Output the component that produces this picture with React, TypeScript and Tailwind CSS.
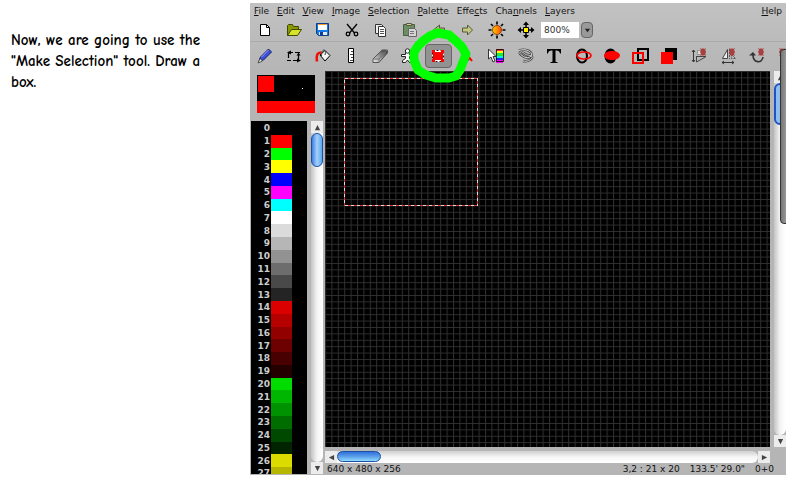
import type { ReactNode } from "react";

const menus = [
  ["", "F", "ile"],
  ["", "E", "dit"],
  ["", "V", "iew"],
  ["", "I", "mage"],
  ["", "S", "election"],
  ["", "P", "alette"],
  ["Effe", "c", "ts"],
  ["Cha", "n", "nels"],
  ["", "L", "ayers"],
];

const palette = [
  "#000000", "#ff0000", "#00ff00", "#ffff00", "#0000ff", "#ff00ff", "#00ffff",
  "#ffffff", "#dbdbdb", "#b6b6b6", "#929292", "#6d6d6d", "#494949", "#242424",
  "#db0000", "#b60000", "#920000", "#6d0000", "#490000", "#240000",
  "#00db00", "#00b600", "#009200", "#006d00", "#004900", "#002400",
  "#dbdb00", "#b6b600",
];

const Icon = ({ children }: { children: ReactNode }) => (
  <svg className="w-5 h-5 shrink-0" viewBox="0 0 20 20" fill="none" stroke="#000">
    {children}
  </svg>
);

const star = "M10 2l2 1 1-1 1 1 2-1-1 2 1 2-1 2 1 2-2-1-1 1-1-1-2 1 1-2-1-2 1-2z";

const fileTools = [
  {
    label: "New",
    icon: (
      <Icon>
        <path d="M5.5 4.5h6l3 3v8h-9z" fill="#fff" />
        <path d="M11.5 4.5v3h3" />
      </Icon>
    ),
  },
  {
    label: "Open",
    icon: (
      <Icon>
        <path d="M3.5 15.5v-10l1-1h4l1 2h5v3" fill="#8a9a00" stroke="#3f4a00" />
        <path d="M3.5 15.5l4-6h10l-4 6z" fill="#d6e32a" stroke="#3f4a00" />
      </Icon>
    ),
  },
  {
    label: "Save",
    icon: (
      <Icon>
        <path d="M3.5 3.5h12v12h-10l-2-2z" fill="#1479e6" stroke="#0b3f8c" />
        <path d="M5 4h9v6H5z" fill="#fff" stroke="none" />
        <path d="M5 4h9v1H5z" fill="#ff9a2a" stroke="none" />
        <path d="M6 12h8v3H6z" fill="#e8e8e8" stroke="none" />
        <path d="M7 12h3v3H7z" fill="#0b3f8c" stroke="none" />
      </Icon>
    ),
  },
  {
    label: "Cut",
    icon: (
      <Icon>
        <path d="M5 4l7.5 9M15 4l-7.5 9" strokeWidth="1.3" />
        <circle cx="6" cy="14" r="1.8" strokeWidth="1.3" />
        <circle cx="14" cy="14" r="1.8" strokeWidth="1.3" />
      </Icon>
    ),
  },
  {
    label: "Copy",
    icon: (
      <Icon>
        <path d="M4.5 4.5h6l2 2v7h-8z" fill="#eee" stroke="#333" />
        <path d="M7.5 6.5h5l2 2v8h-7z" fill="#fff" stroke="#333" />
        <path d="M9 9.5h4M9 11.5h4M9 13.5h4" stroke="#555" />
      </Icon>
    ),
  },
  {
    label: "Paste",
    icon: (
      <Icon>
        <path d="M3.5 4.5h11v11h-11z" fill="#6d8f62" stroke="#46603e" />
        <path d="M6.5 3.5h5v2h-5z" fill="#d8cf9c" stroke="#5a5a48" />
        <path d="M8.5 8.5h6l2 2v6h-8z" fill="#d5d5d5" stroke="#666" />
        <path d="M10 11.5h4M10 13.5h4" stroke="#777" />
      </Icon>
    ),
  },
  {
    label: "Undo",
    icon: (
      <Icon>
        <path d="M4.5 10l6-5v3h5v4h-5v3z" fill="#b3b878" stroke="#55583a" />
      </Icon>
    ),
  },
  {
    label: "Redo",
    icon: (
      <Icon>
        <path d="M14.5 10l-5-5v3h-5v4h5v3z" fill="#c3c882" stroke="#55583a" />
      </Icon>
    ),
  },
  {
    label: "Brightness",
    icon: (
      <Icon>
        <defs>
          <linearGradient id="sun">
            <stop offset="0" stopColor="#ffd000" />
            <stop offset="1" stopColor="#ff4800" />
          </linearGradient>
        </defs>
        <path
          d="M10 1.5v3M10 15.5v3M1.5 10h3M15.5 10h3M4 4l2 2M14 14l2 2M16 4l-2 2M6 14l-2 2"
          strokeWidth="1.7"
        />
        <circle cx="10" cy="10" r="4.5" fill="url(#sun)" stroke="#7a2a00" strokeWidth=".8" />
      </Icon>
    ),
  },
  {
    label: "Pan window",
    icon: (
      <Icon>
        <path
          d="M10 1.5l3 3.5H7zM10 18.5l3-3.5H7zM1.5 10L5 7v6zM18.5 10L15 7v6z"
          fill="#000"
          stroke="none"
        />
        <path d="M10 4v12M4 10h12" strokeWidth="1.5" />
        <path d="M7.5 7.5h5v5h-5z" fill="#ffee00" />
      </Icon>
    ),
  },
];

const paintTools = [
  {
    label: "Paint",
    icon: (
      <Icon>
        <path d="M4 15l1.5-4 8-8 3 3-8 8z" fill="#3d50d8" stroke="#151c66" />
        <path d="M6.5 11l7-7" stroke="#9aa6ff" />
        <path d="M3 17l2-4.5L7.5 15z" fill="#eee" stroke="#333" strokeWidth=".8" />
      </Icon>
    ),
  },
  {
    label: "Shuffle",
    icon: (
      <Icon>
        <path d="M6 6.5h3M11 6.5h5M14.5 9v5M4.5 7v5M3 14.5h4M9 14.5h4" strokeWidth="1.2" />
        <path d="M3 6.5l4-2v4zM14.5 6.5l-2 3h4zM17 14.5l-4-2v4z" fill="#000" stroke="none" />
      </Icon>
    ),
  },
  {
    label: "Flood fill",
    icon: (
      <Icon>
        <path d="M7 9l5-4.5 5 5-5 5.5z" fill="#f4f4f4" />
        <path d="M8.5 10c0-4 1-6 2.5-6s2 1.5 1 5" stroke="#444" />
        <path d="M8.5 6.5c-4 0-5.5 2-4.5 9" stroke="#f01000" strokeWidth="2.5" />
      </Icon>
    ),
  },
  {
    label: "Straight line",
    icon: (
      <Icon>
        <path d="M6.5 2.5h5v14h-5z" fill="#fff" />
        <path d="M9 5.5h2M8 8.5h3M9 11.5h2M8 14.5h3" stroke="#444" />
      </Icon>
    ),
  },
  {
    label: "Smudge",
    icon: (
      <Icon>
        <defs>
          <linearGradient id="smudge" x1="0" y1="1" x2="1" y2="0">
            <stop offset="0" stopColor="#eee" />
            <stop offset="1" stopColor="#333" />
          </linearGradient>
        </defs>
        <path d="M2 13l9-9h5.5v3L8 16.5H2z" fill="url(#smudge)" stroke="#555" />
        <path d="M2.5 13H8l8-9M8 13v3" stroke="#777" />
      </Icon>
    ),
  },
  {
    label: "Clone",
    icon: (
      <Icon>
        <path
          d="M5.5 6.5v2h-4v2h4v2l-3 2v2h3l2-2.5 2 2.5h3v-2l-3-2v-2h3v-2h-3v-2z"
          fill="#fff"
          stroke="#222"
        />
        <circle cx="7.5" cy="5" r="2.2" fill="#fff" stroke="#222" />
      </Icon>
    ),
  },
  {
    label: "Make Selection",
    icon: (
      <Icon>
        <path d="M3 4h12v12H3z" fill="#fff" stroke="none" />
        <path d="M3.5 4.5h11v11h-11z" stroke="#111" strokeDasharray="2 2" />
        <path d="M5 6h8v8H5zM3 4h3v3H3zM12 4h3v3h-3zM3 13h3v3H3zM12 13h3v3h-3z" fill="#f00" stroke="none" />
        <path d="M4 6h10v8H4z" fill="#f00" stroke="none" />
      </Icon>
    ),
  },
  {
    label: "Polygon selection",
    icon: (
      <Icon>
        <path d="M8 7l3 4v3H7z" fill="#f00" stroke="#500" />
        <path d="M11 11l3 4" stroke="#f00" strokeWidth="2" />
      </Icon>
    ),
  },
  {
    label: "Place gradient",
    icon: (
      <Icon>
        <path d="M9 3h7v3H9z" fill="#f33" stroke="none" />
        <path d="M9 5h7v2H9z" fill="#ff0" stroke="none" />
        <path d="M9 7h7v3H9z" fill="#1e3" stroke="none" />
        <path d="M9 10h7v2H9z" fill="#0ee" stroke="none" />
        <path d="M9 12h7v2H9z" fill="#22f" stroke="none" />
        <path d="M9 14h7v3H9z" fill="#f0f" stroke="none" />
        <path d="M9.5 3.5h7v12h-7z" strokeWidth=".8" />
        <path d="M1.5 3v10L4 11l2 5 2-1-2-4.5h3z" fill="#fff" stroke="#333" />
      </Icon>
    ),
  },
  {
    label: "Lasso",
    icon: (
      <Icon>
        <path
          d="M3 4.5c5-2 12 0 12.500 3.500s-5 4.500-8 2.500-5-3.500-3-4.500 4 2.500 7 3 5.500 1 4.500 3-5 4-9 3"
          stroke="#444"
          strokeWidth="2.4"
        />
        <path
          d="M3 4.5c5-2 12 0 12.500 3.500s-5 4.500-8 2.500-5-3.500-3-4.500 4 2.500 7 3 5.500 1 4.500 3-5 4-9 3"
          stroke="#ddd"
        />
      </Icon>
    ),
  },
  {
    label: "Paste text",
    icon: (
      <Icon>
        <path
          d="M2 3h14v4.5h-1c-.5-2-1-3-4.500-3V15c0 1 .5 1 2 1v1h-7v-1c1.500 0 2 0 2-1V4.500C4 4.500 3.500 5.500 3 7.500H2z"
          fill="#000"
          stroke="none"
        />
      </Icon>
    ),
  },
  {
    label: "Ellipse outline",
    icon: (
      <Icon>
        <ellipse cx="8" cy="10" rx="5" ry="6.5" strokeWidth="2" />
        <ellipse cx="10" cy="9.5" rx="7" ry="3.5" stroke="#f00" strokeWidth="1.7" />
      </Icon>
    ),
  },
  {
    label: "Filled ellipse",
    icon: (
      <Icon>
        <ellipse cx="7.5" cy="10" rx="6" ry="7.5" fill="#000" stroke="none" />
        <ellipse cx="9" cy="9.5" rx="8" ry="4.5" fill="#f00" stroke="none" />
      </Icon>
    ),
  },
  {
    label: "Outline rectangle",
    icon: (
      <Icon>
        <path d="M6 3h10v11H6z" strokeWidth="2" />
        <path d="M1 7h10v10H1z" stroke="#f00" strokeWidth="2" />
      </Icon>
    ),
  },
  {
    label: "Filled rectangle",
    icon: (
      <Icon>
        <path d="M4 2h12v12H4z" fill="#000" stroke="none" />
        <path d="M0 6h12v12H0z" fill="#f00" stroke="none" />
      </Icon>
    ),
  },
  {
    label: "Flip vertically",
    icon: (
      <Icon>
        <path d="M3.5 4v12M2 6l1.5-2L5 6M2 14l1.5 2L5 14" stroke="#333" />
        <path d="M7.5 4.5h8v4h-8z" stroke="#666" strokeDasharray="1 1" fill="#ddd" />
        <path d="M6 10.5h10M6.5 11v5l9-5" stroke="#444" />
        <path d={star} fill="#a94040" stroke="none" />
      </Icon>
    ),
  },
  {
    label: "Flip horizontally",
    icon: (
      <Icon>
        <path d="M3.5 12.5h5v-9z" fill="#eee" stroke="#444" />
        <path d="M10.5 3v10M12.5 8.5v4h4z" stroke="#555" strokeDasharray="2 1" />
        <path d="M3 16.5h12M5 15l-2 1.5L5 18M13 15l2 1.5-2 1.5" stroke="#333" />
        <path d={star} fill="#a94040" stroke="none" />
      </Icon>
    ),
  },
  {
    label: "Rotate clockwise",
    icon: (
      <Icon>
        <path d="M5 9c0 8 9 9 10 2" stroke="#333" strokeWidth="1.6" />
        <path d="M1 9.5L5 6l3 3.5z" fill="#333" stroke="none" />
        <path d={star} fill="#a94040" stroke="none" />
      </Icon>
    ),
  },
  {
    label: "Rotate anticlockwise",
    icon: (
      <Icon>
        <path d={star} fill="#a94040" stroke="none" transform="translate(-8 0)" />
      </Icon>
    ),
  },
];

const Arrow = ({ label, d }: { label: string; d: string }) => (
  <button aria-label={label} className="flex items-center justify-center w-3 h-3 shrink-0 bg-[#ececec]">
    <svg className="w-[7px] h-[7px]" viewBox="0 0 8 8" fill="#444">
      <path d={d} />
    </svg>
  </button>
);

const VerticalScroll = ({ thumb }: { thumb: ReactNode }) => (
  <div className="flex flex-col w-3 h-full shrink-0">
    <Arrow label="Scroll up" d="M4 1l3 6H1z" />
    <div className="flex-1 min-h-0 rounded-b-full bg-linear-to-r from-[#c4c4c4] via-[#f4f4f4] to-white">
      {thumb}
    </div>
    <Arrow label="Scroll down" d="M4 7L1 1h6z" />
  </div>
);

const MenuBar = () => (
  <nav className="flex items-center gap-2 h-4 pl-1 pr-1 shrink-0">
    {menus.map(([before, key, after]) => (
      <button key={before + key + after} className="leading-4">
        {before}
        <span className="underline underline-offset-1">{key}</span>
        {after}
      </button>
    ))}
    <button className="ml-auto leading-4">
      <span className="underline underline-offset-1">H</span>elp
    </button>
  </nav>
);

const FileBar = () => (
  <div className="flex items-center h-[22px] shrink-0">
    {fileTools.map((tool) => (
      <button
        key={tool.label}
        aria-label={tool.label}
        className="flex items-center justify-center w-[29px] h-[22px] shrink-0"
      >
        {tool.icon}
      </button>
    ))}
    <input
      aria-label="Zoom"
      defaultValue="800%"
      className="w-[38px] h-4 px-[3px] ml-px bg-white text-[#333] outline-none"
    />
    <button
      aria-label="Zoom levels"
      className="flex items-center justify-center w-3 h-4 ml-0.5 rounded-sm border border-[#666] bg-[#999]"
    >
      <svg className="w-[7px] h-[7px]" viewBox="0 0 8 8" fill="#222">
        <path d="M4 6L1 2h6z" />
      </svg>
    </button>
  </div>
);

const PaintBar = () => (
  <div className="flex items-center h-[29px] shrink-0 border-t border-[#a9a9a9]">
    {paintTools.map((tool) => (
      <div key={tool.label} className="relative flex justify-center w-[29px] shrink-0">
        <button
          aria-label={tool.label}
          className={
            tool.label === "Make Selection"
              ? "flex items-center justify-center w-[27px] h-6 rounded-sm border border-[#666] bg-[#929292]"
              : "flex items-center justify-center w-[27px] h-6"
          }
        >
          {tool.icon}
        </button>
        {tool.label === "Make Selection" && (
          <svg
            className="absolute z-10 -left-4 -top-4 w-[64px] h-14 max-w-none pointer-events-none"
            viewBox="0 0 64 56"
            fill="none"
            stroke="#00ff00"
            strokeWidth="9"
            strokeLinejoin="round"
          >
            <path d="M15 13l7-5 7-3 12 2 7 6 6 6 4 7-3 8-3 8-4 6-7 2H28l-10-3-8-5-4-10v-8l4-6z" />
          </svg>
        )}
      </div>
    ))}
  </div>
);

const Palette = () => (
  <aside className="flex flex-col w-[75px] shrink-0">
    <div className="flex justify-center h-[50px] pt-1 pr-[3px] shrink-0">
      <svg className="w-[58px] h-[38px]" viewBox="0 0 58 38">
        <path d="M0 0h58v38H0z" fill="#000" />
        <path d="M1 1h16v16H1zM0 26h58v12H0z" fill="#f00" />
        <path d="M45 13h1v1h-1z" fill="#fff" />
      </svg>
    </div>
    <div className="flex flex-1 min-h-0 pb-px">
      <div className="flex flex-col w-[56px] ml-px pt-px bg-black shrink-0 overflow-hidden">
        {palette.map((color, i) => (
          <div
            key={color}
            className={
              i === palette.length - 1
                ? "flex h-[7px] shrink-0 overflow-hidden"
                : "flex flex-1 items-center min-h-0"
            }
          >
            <span className="w-5 pr-px text-right font-bold leading-3 text-[#ccc]">{i}</span>
            <span className="w-[21px] h-full" style={{ backgroundColor: color }} />
          </div>
        ))}
      </div>
      <div className="ml-1">
        <VerticalScroll
          thumb={
            <div className="w-3 h-[34px] rounded-full border border-[#1c4fa8] bg-linear-to-r from-[#3b7fe0] via-[#a5d0fa] to-[#58a8ee]" />
          }
        />
      </div>
    </div>
  </aside>
);

const Canvas = () => (
  <svg className="flex-1 min-w-0 h-full bg-black">
    <defs>
      <pattern id="grid" width="6.4" height="6.4" patternUnits="userSpaceOnUse">
        <path d="M0 .5h6.4M.5 0v6.4" stroke="#303030" />
      </pattern>
    </defs>
    <rect width="100%" height="100%" fill="url(#grid)" />
    <g fill="none" shapeRendering="crispEdges">
      <rect x="19.5" y="7.5" width="133" height="127" stroke="#e03030" />
      <rect x="19.5" y="7.5" width="133" height="127" stroke="#ddd" strokeDasharray="3 3" />
    </g>
  </svg>
);

const Editor = () => (
  <div className="relative flex flex-col flex-1 min-w-0 overflow-hidden bg-[#b5b5b5] bg-linear-to-b from-[#c2c2c2] to-[#b5b5b5] to-15% font-['DejaVu_Sans',sans-serif] text-[9px] text-[#111]">
    <MenuBar />
    <FileBar />
    <PaintBar />
    <div className="flex flex-1 min-h-0 pt-px">
      <Palette />
      <div className="flex flex-col flex-1 min-w-0">
        <div className="flex flex-1 min-h-0">
          <Canvas />
          <div className="ml-1">
            <VerticalScroll
              thumb={
                <div className="w-3 h-[42px] rounded-full border-2 border-[#1c55c0] bg-[#8fbdf0]" />
              }
            />
          </div>
        </div>
        <div className="flex h-3 mt-1 mr-4 shrink-0">
          <Arrow label="Scroll left" d="M1 4l6-3v6z" />
          <div className="flex-1 rounded-r-full bg-linear-to-b from-[#cfcfcf] via-[#f6f6f6] to-white">
            <div className="w-11 h-[11px] rounded-full border border-[#1c4fa8] bg-linear-to-b from-[#2f70dc] via-[#5c9ee8] to-[#8fdcff]" />
          </div>
          <Arrow label="Scroll right" d="M7 4L1 1v6z" />
        </div>
        <footer className="flex h-3 gap-[10px] pl-0.5 pr-3 leading-3 shrink-0">
          <span>640 x 480 x 256</span>
          <span className="ml-auto">3,2 : 21 x 20</span>
          <span>133.5' 29.0"</span>
          <span>0+0</span>
        </footer>
      </div>
    </div>
    <div className="absolute -right-1 top-[46px] w-[10px] h-[175px] rounded-sm border border-[#333] bg-linear-to-r from-[#777] to-[#aaa]" />
  </div>
);

const App = () => {
  return (
    <main className="flex h-screen pt-[3px] pb-[9px] pr-[9px] bg-white">
      <div className="w-[250px] shrink-0 pt-[27px] pl-[11px] pr-8">
        <p className="font-['Comic_Sans_MS','Comic_Neue',Lato,sans-serif] text-[15px] leading-[21px] font-bold text-black">
          Now, we are going to use the "Make Selection" tool. Draw a box.
        </p>
      </div>
      <Editor />
    </main>
  );
};

export default App;
